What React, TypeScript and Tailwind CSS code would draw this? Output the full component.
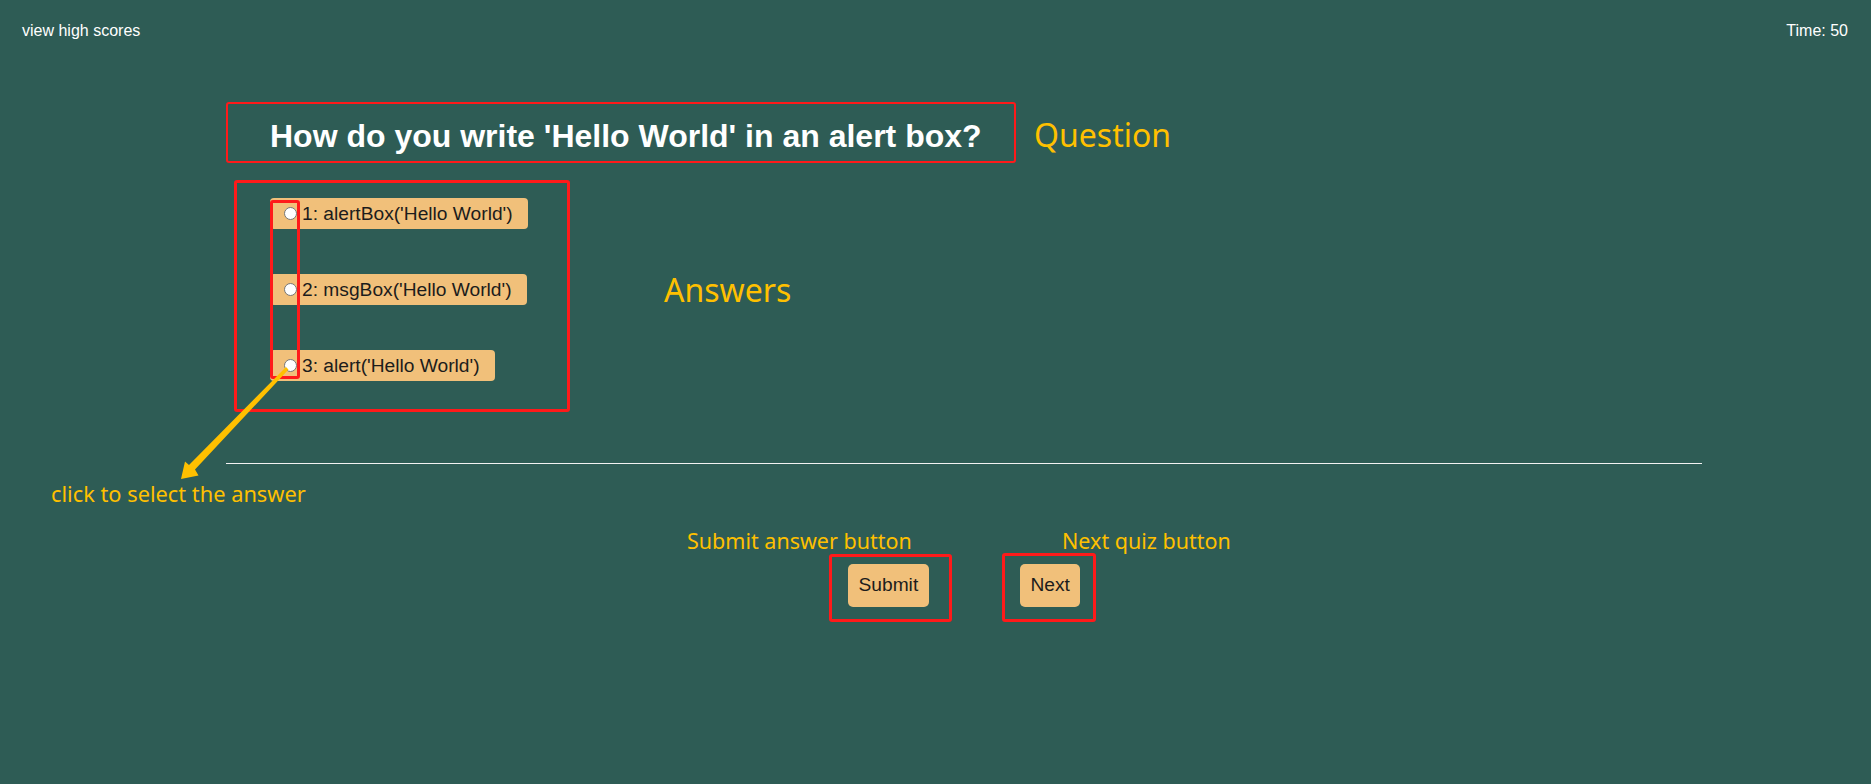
import React from "react";

const answers = [
  "1: alertBox('Hello World')",
  "2: msgBox('Hello World')",
  "3: alert('Hello World')",
];

export default function App() {
  return (
    <div className="relative w-full h-[784px] overflow-hidden bg-[#2e5c55] font-['Liberation_Sans',Arial,sans-serif]">
      {/* header */}
      <div className="flex justify-between pl-[22px] pr-[23px] pt-[22px] text-[16px] leading-[18px] text-white">
        <span>view high scores</span>
        <span>Time: 50</span>
      </div>

      {/* question row */}
      <div className="flex items-start ml-[226px] mt-[62px]">
        <div className="w-[790px] h-[61px] border-2 border-[#ff1a1a] rounded-[3px] pl-[42px] pt-[14px]">
          <h1 className="text-[32px] leading-[37px] font-bold text-white">
            How do you write 'Hello World' in an alert box?
          </h1>
        </div>
        <span className="ml-[18px] mt-[16.6px] text-[32px] leading-[32px] text-[#ffc000] font-['Noto_Sans',sans-serif]">
          Question
        </span>
      </div>

      {/* answers row */}
      <div className="flex items-start ml-[234px] mt-[17px]">
        <div className="relative w-[336px] h-[232px] border-[3px] border-[#ff1a1a] rounded-[3px] pl-[33px] pt-[15px]">
          <div className="flex flex-col items-start gap-[45px]">
            {answers.map((a) => (
              <label
                key={a}
                className="flex items-center h-[31px] bg-[#f1c07a] rounded-[4px] pl-[14px] pr-[15px] text-[19.2px] leading-[22px] text-[#1c1c1c]"
              >
                <span className="w-[13px] h-[13px] rounded-full bg-white border border-[#767676] mr-[5px] shrink-0" />
                <span>{a}</span>
              </label>
            ))}
          </div>
          <div className="absolute left-[33px] top-[17px] w-[30px] h-[179px] border-[3px] border-[#ff1a1a] rounded-[3px]" />
        </div>
        <span className="ml-[94px] mt-[93.6px] text-[32px] leading-[32px] text-[#ffc000] font-['Noto_Sans',sans-serif]">
          Answers
        </span>
      </div>

      {/* divider */}
      <div className="ml-[226px] mt-[51px] w-[1476px] h-px bg-[#f2f2f2]" />

      {/* annotation */}
      <div className="ml-[51px] mt-[19px] text-[21.8px] leading-[21.8px] text-[#ffc000] font-['Noto_Sans',sans-serif]">
        click to select the answer
      </div>

      {/* button labels */}
      <div className="flex mt-[25px] text-[21.5px] leading-[21.5px] text-[#ffc000] font-['Noto_Sans',sans-serif]">
        <span className="ml-[687px] w-[375px] shrink-0">Submit answer button</span>
        <span>Next quiz button</span>
      </div>

      {/* buttons */}
      <div className="flex items-start mt-[1.5px]">
        <div className="ml-[829px] mt-[1px] w-[123px] h-[68px] border-[3px] border-[#ff1a1a] rounded-[3px] pl-[16px] pt-[7px]">
          <button className="h-[43px] px-[10.5px] bg-[#f1c07a] rounded-[5px] text-[19.2px] leading-[22px] text-[#1c1c1c]">
            Submit
          </button>
        </div>
        <div className="ml-[50px] w-[94px] h-[69px] border-[3px] border-[#ff1a1a] rounded-[3px] pl-[15px] pt-[8px]">
          <button className="h-[43px] px-[10.5px] bg-[#f1c07a] rounded-[5px] text-[19.2px] leading-[22px] text-[#1c1c1c]">
            Next
          </button>
        </div>
      </div>

      {/* arrow */}
      <svg
        className="absolute left-[170px] top-[355px] pointer-events-none"
        width="130"
        height="135"
        viewBox="170 355 130 135"
      >
        <polygon
          points="286,367 288.5,369.5 195,469.5 198.5,475.5 181,479 185,461.5 189,465"
          fill="#ffc000"
        />
      </svg>
    </div>
  );
}
